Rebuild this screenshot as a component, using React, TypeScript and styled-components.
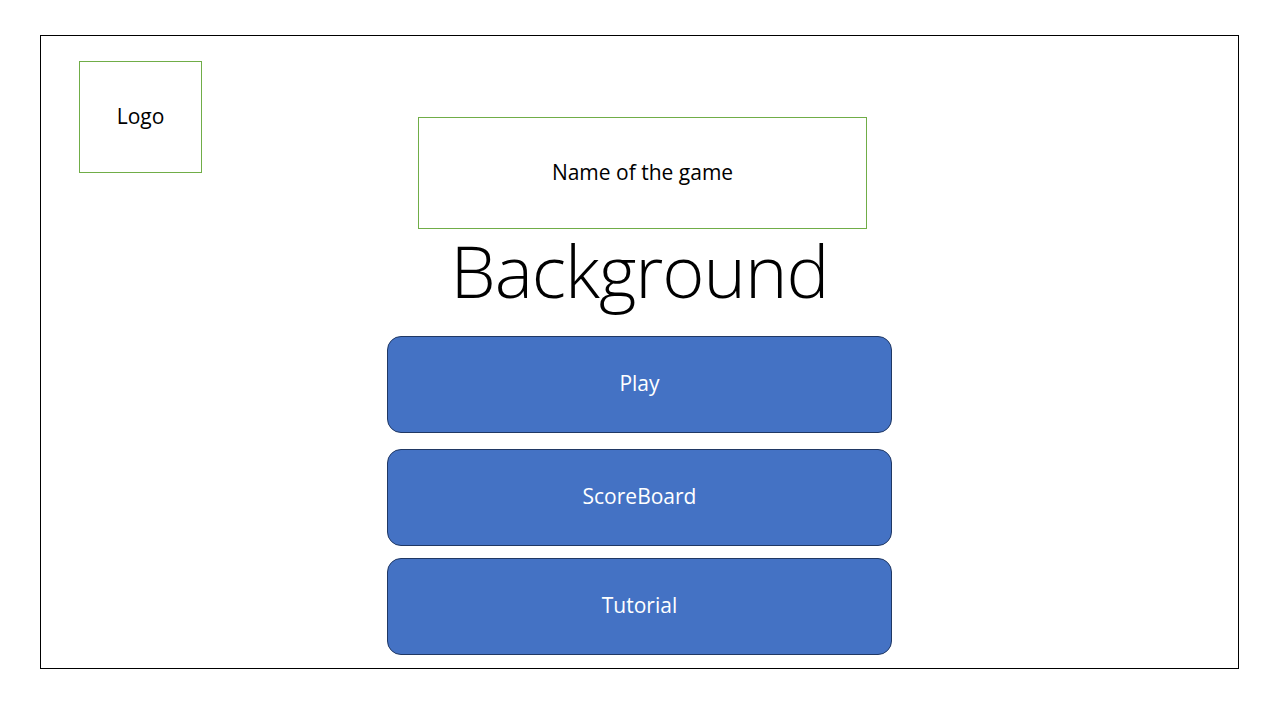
import React from 'react';
import styled, {createGlobalStyle} from 'styled-components';

const GlobalStyle = createGlobalStyle`
body{
margin:0;
background:#ffffff;
font-family:"Open Sans","Liberation Sans",sans-serif;
}
`

const Page = styled.div`
width:1280px;
height:720px;
padding:35px 0 0 40px;
box-sizing:border-box;
`

const Frame = styled.div`
width:1199px;
height:634px;
box-sizing:border-box;
border:1px solid #000000;
display:grid;
grid-template-columns:346px 505px 1fr;
`

const LogoBox = styled.div`
margin:25px 0 0 38px;
width:123px;
height:112px;
box-sizing:border-box;
border:1px solid #70ad47;
display:flex;
align-items:center;
justify-content:center;
font-size:21px;
color:#000;
padding-bottom:3px;
`

const Column = styled.div`
padding-top:81px;
display:flex;
flex-direction:column;
`

const TitleBox = styled.div`
margin:0 25px 0 31px;
height:112px;
box-sizing:border-box;
border:1px solid #70ad47;
display:flex;
align-items:center;
justify-content:center;
font-size:21px;
color:#000;
padding-bottom:3px;
`

const Heading = styled.h1`
margin:4px 0 29px;
font-size:72px;
font-weight:300;
line-height:74px;
text-align:center;
color:#000;
letter-spacing:-1px;
`

const Buttons = styled.div`
display:flex;
flex-direction:column;
`

const MenuButton = styled.button<{gap?:number}>`
height:97px;
margin-top:${(props)=>props.gap ?? 0}px;
box-sizing:border-box;
border:1px solid #203864;
border-radius:14px;
background:#4472c4;
color:#ffffff;
font-family:"Open Sans","Liberation Sans",sans-serif;
font-size:21px;
display:flex;
align-items:center;
justify-content:center;
padding:0 0 3px;
`

const menu = [
    {label:"Play",gap:0},
    {label:"ScoreBoard",gap:16},
    {label:"Tutorial",gap:12},
]

const App = () => {
    return (
        <Page>
            <GlobalStyle/>
            <Frame>
                <div>
                    <LogoBox>Logo</LogoBox>
                </div>
                <Column>
                    <TitleBox>Name of the game</TitleBox>
                    <Heading>Background</Heading>
                    <Buttons>
                        {menu.map(({label,gap})=>(
                            <MenuButton key={label} gap={gap}>{label}</MenuButton>
                        ))}
                    </Buttons>
                </Column>
            </Frame>
        </Page>
    );
};

export default App;
